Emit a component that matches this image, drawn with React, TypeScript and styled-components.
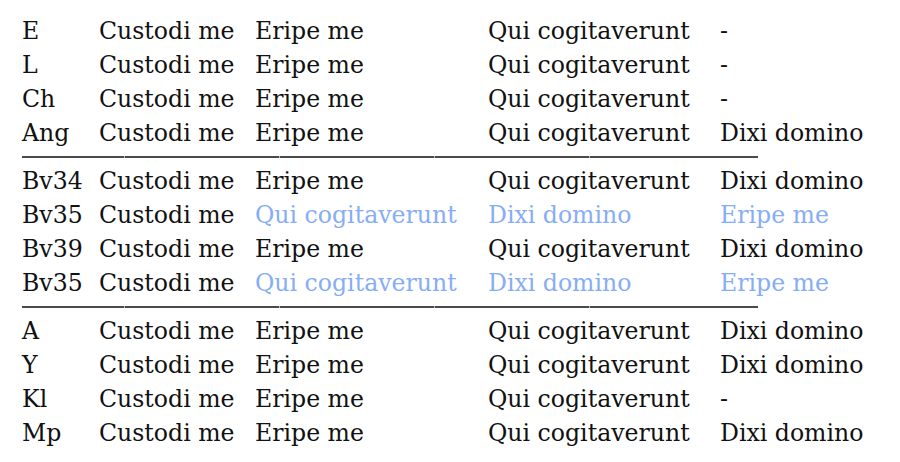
import React from 'react';
import styled, { createGlobalStyle } from 'styled-components';

const GlobalStyle = createGlobalStyle`
  html, body {
    margin: 0;
    padding: 0;
    background: #ffffff;
  }
`;

const Page = styled.div`
  padding: 14px 0 0 22px;
  font-family: 'DejaVu Serif', 'Liberation Serif', serif;
  font-size: 23.6px;
  color: #111111;
`;

const Row = styled.div`
  display: grid;
  grid-template-columns: 77px 156px 233px 232px auto;
  height: 34px;
  line-height: 34px;
  white-space: nowrap;
`;

const Cell = styled.span<{ $soft?: boolean }>`
  color: ${(p) => (p.$soft ? '#86adf6' : '#111111')};
`;

const Rule = styled.div`
  display: flex;
  align-items: center;
  height: 14px;
`;

const RuleSegment = styled.div<{ $w: number }>`
  width: ${(p) => p.$w}px;
  height: 2px;
  background: #4a4a4a;
  border-right: 1px solid #b8b8b8;
  box-sizing: border-box;

  &:last-child {
    border-right: none;
  }
`;

type Line = { label: string; cells: string[]; swapped?: boolean };

const groups: Line[][] = [
  [
    { label: 'E', cells: ['Custodi me', 'Eripe me', 'Qui cogitaverunt', '-'] },
    { label: 'L', cells: ['Custodi me', 'Eripe me', 'Qui cogitaverunt', '-'] },
    { label: 'Ch', cells: ['Custodi me', 'Eripe me', 'Qui cogitaverunt', '-'] },
    { label: 'Ang', cells: ['Custodi me', 'Eripe me', 'Qui cogitaverunt', 'Dixi domino'] },
  ],
  [
    { label: 'Bv34', cells: ['Custodi me', 'Eripe me', 'Qui cogitaverunt', 'Dixi domino'] },
    { label: 'Bv35', cells: ['Custodi me', 'Qui cogitaverunt', 'Dixi domino', 'Eripe me'], swapped: true },
    { label: 'Bv39', cells: ['Custodi me', 'Eripe me', 'Qui cogitaverunt', 'Dixi domino'] },
    { label: 'Bv35', cells: ['Custodi me', 'Qui cogitaverunt', 'Dixi domino', 'Eripe me'], swapped: true },
  ],
  [
    { label: 'A', cells: ['Custodi me', 'Eripe me', 'Qui cogitaverunt', 'Dixi domino'] },
    { label: 'Y', cells: ['Custodi me', 'Eripe me', 'Qui cogitaverunt', 'Dixi domino'] },
    { label: 'Kl', cells: ['Custodi me', 'Eripe me', 'Qui cogitaverunt', '-'] },
    { label: 'Mp', cells: ['Custodi me', 'Eripe me', 'Qui cogitaverunt', 'Dixi domino'] },
  ],
];

const ruleWidths = [103, 155, 155, 155, 168];

const Separator: React.FC = () => (
  <Rule>
    {ruleWidths.map((w, i) => (
      <RuleSegment key={i} $w={w} />
    ))}
  </Rule>
);

const App: React.FC = () => {
  return (
    <>
      <GlobalStyle />
      <Page>
        {groups.map((group, gi) => (
          <React.Fragment key={gi}>
            {gi > 0 && <Separator />}
            {group.map((line, ri) => (
              <Row key={ri}>
                <Cell>{line.label}</Cell>
                {line.cells.map((c, ci) => (
                  <Cell key={ci} $soft={line.swapped && ci > 0}>
                    {c}
                  </Cell>
                ))}
              </Row>
            ))}
          </React.Fragment>
        ))}
      </Page>
    </>
  );
};

export default App;
